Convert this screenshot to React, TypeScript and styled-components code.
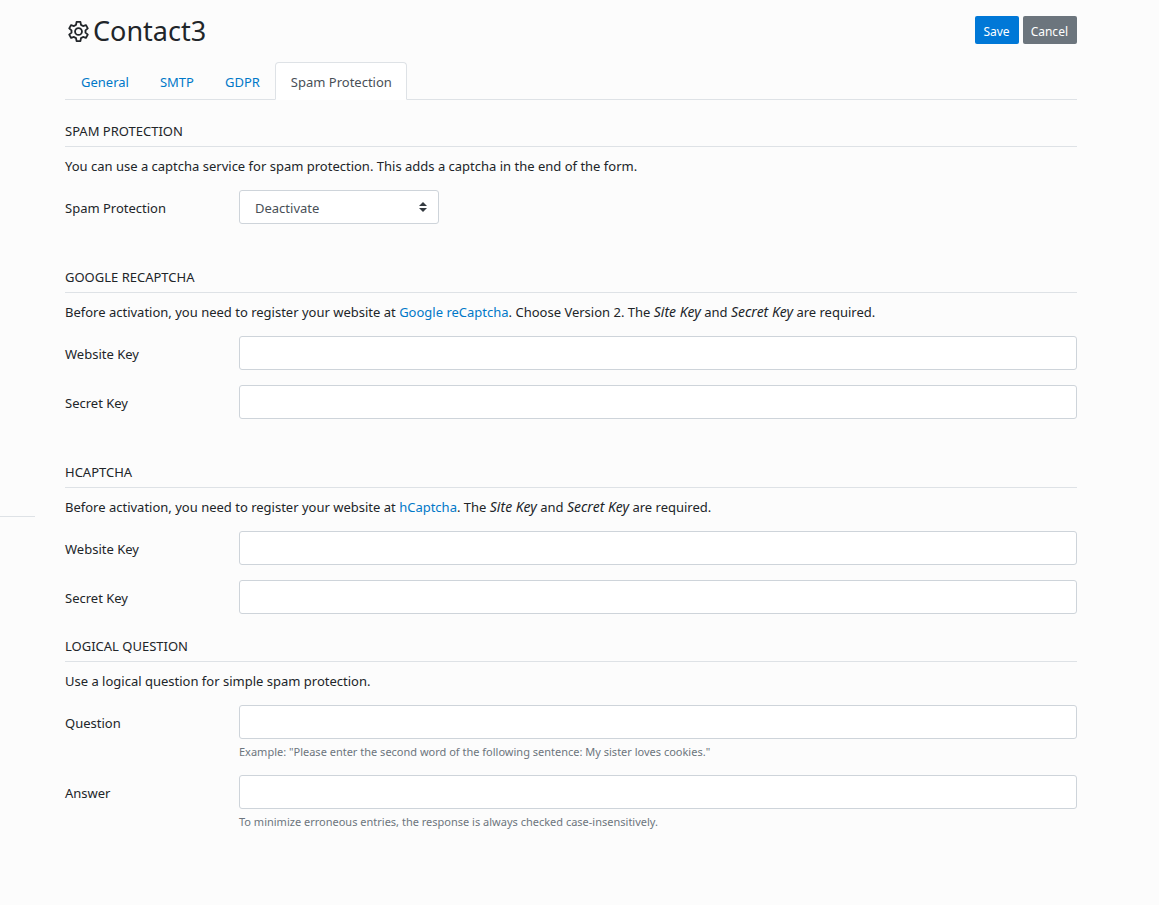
import React from 'react';
import styled, { createGlobalStyle } from 'styled-components';

const GlobalStyle = createGlobalStyle`
  *, *::before, *::after { box-sizing: border-box; }
  body {
    margin: 0;
    background: #fcfcfc;
    color: #212529;
    font-family: "Noto Sans", "Open Sans", sans-serif;
    font-size: 13px;
    line-height: 21px;
  }
  a { color: #0078c8; text-decoration: none; }
  a:hover { text-decoration: underline; }
`;

const Page = styled.div`
  display: flex;
  min-height: 100vh;
`;

const Sidebar = styled.aside`
  flex: 0 0 35px;
  padding-top: 516px;
`;

const Divider = styled.hr`
  margin: 0;
  border: 0;
  border-top: 1px solid #dee2e6;
`;

const Main = styled.main`
  flex: 1;
  min-width: 0;
  padding: 0 82px 48px 30px;
`;

const Header = styled.header`
  display: flex;
  justify-content: space-between;
  align-items: flex-start;
  height: 62px;
  padding-top: 16px;
`;

const Title = styled.h1`
  display: flex;
  align-items: center;
  gap: 3px;
  margin: 0;
  padding-left: 2px;
  font-size: 27px;
  line-height: 30px;
  font-weight: 400;
`;

const Actions = styled.div`
  display: flex;
  gap: 4px;
`;

const Button = styled.button<{ $tone: string }>`
  height: 28px;
  padding: 2px 9px 0 8px;
  border: 0;
  border-radius: 2px;
  background: ${(p) => p.$tone};
  color: #fff;
  font: inherit;
  font-size: 12px;
  cursor: pointer;
`;

const Tabs = styled.nav`
  display: flex;
  border-bottom: 1px solid #dee2e6;
`;

const Tab = styled.a<{ $active?: boolean }>`
  height: 38px;
  margin-bottom: -1px;
  padding: 9px 14px 0 15px;
  border: 1px solid ${(p) => (p.$active ? '#dee2e6' : 'transparent')};
  border-bottom-color: ${(p) => (p.$active ? '#fff' : 'transparent')};
  border-radius: 4px 4px 0 0;
  background: ${(p) => (p.$active ? '#fff' : 'transparent')};
  ${(p) => p.$active && 'color: #495057;'}
`;

const Section = styled.section<{ $gap: number }>`
  padding-top: ${(p) => p.$gap}px;
`;

const Heading = styled.h2`
  margin: 0 0 9px;
  padding-bottom: 5px;
  border-bottom: 1px solid #dee2e6;
  font-size: 13px;
  line-height: 20px;
  font-weight: 400;
  text-transform: uppercase;
`;

const Intro = styled.p`
  margin: 0 0 13px;

  em {
    font-size: 14px;
    line-height: 20px;
  }
`;

const Row = styled.div`
  display: grid;
  grid-template-columns: 174px minmax(0, 1fr);
  margin-bottom: 15px;
`;

const Label = styled.label`
  padding-top: 8px;
`;

const Input = styled.input`
  display: block;
  width: 100%;
  height: 34px;
  padding: 6px 15px;
  border: 1px solid #ced4da;
  border-radius: 3px;
  background: #fff;
  color: #495057;
  font: inherit;
`;

const SelectBox = styled.div`
  position: relative;
  width: 200px;
`;

const Select = styled.select`
  display: block;
  width: 100%;
  height: 34px;
  padding: 2px 28px 0 15px;
  border: 1px solid #ced4da;
  border-radius: 3px;
  background: #fff;
  color: #495057;
  font: inherit;
  appearance: none;
`;

const Arrows = styled.svg`
  position: absolute;
  top: 12px;
  right: 12px;
  pointer-events: none;
`;

const Hint = styled.small`
  display: block;
  margin-top: 4px;
  color: #6c757d;
  font-size: 11px;
  line-height: 17px;
`;

const GearIcon = () => (
  <svg width="23" height="23" viewBox="0 0 24 24" fill="none" stroke="currentColor" strokeWidth="1.9" strokeLinejoin="round" aria-hidden="true">
    <path d="M10 2h4l.6 3.1 2.1 1.2 3-1 2 3.4-2.4 2.1v2.4l2.4 2.1-2 3.4-3-1-2.1 1.2L14 22h-4l-.6-3.1-2.1-1.2-3 1-2-3.4 2.4-2.1v-2.4L2.300 8.700l2-3.400 3 1 2.100-1.200z" />
    <circle cx="12" cy="12" r="3.600" />
  </svg>
);

type FieldProps = { id: string; label: string; hint?: string };

const Field = ({ id, label, hint }: FieldProps) => (
  <Row>
    <Label htmlFor={id}>{label}</Label>
    <div>
      <Input id={id} type="text" />
      {hint && <Hint>{hint}</Hint>}
    </div>
  </Row>
);

export default function App() {
  return (
    <>
      <GlobalStyle />
      <Page>
        <Sidebar>
          <Divider />
        </Sidebar>
        <Main>
          <Header>
            <Title>
              <GearIcon />
              Contact3
            </Title>
            <Actions>
              <Button type="button" $tone="#0078d7">Save</Button>
              <Button type="button" $tone="#6c757d">Cancel</Button>
            </Actions>
          </Header>
          <Tabs>
            <Tab href="#general">General</Tab>
            <Tab href="#smtp">SMTP</Tab>
            <Tab href="#gdpr">GDPR</Tab>
            <Tab href="#spam" $active>Spam Protection</Tab>
          </Tabs>

          <Section $gap={21}>
            <Heading>Spam Protection</Heading>
            <Intro>You can use a captcha service for spam protection. This adds a captcha in the end of the form.</Intro>
            <Row>
              <Label htmlFor="protection">Spam Protection</Label>
              <SelectBox>
                <Select id="protection" defaultValue="off">
                  <option value="off">Deactivate</option>
                  <option value="google">Google reCaptcha</option>
                  <option value="hcaptcha">hCaptcha</option>
                  <option value="question">Logical Question</option>
                </Select>
                <Arrows width="8" height="10" viewBox="0 0 8 10" fill="#343a40" aria-hidden="true">
                  <path d="M4 0l4 4H0zM0 6h8l-4 4z" />
                </Arrows>
              </SelectBox>
            </Row>
          </Section>

          <Section $gap={28}>
            <Heading>Google reCaptcha</Heading>
            <Intro>
              Before activation, you need to register your website at <a href="#recaptcha">Google reCaptcha</a>. Choose
              Version 2. The <em>Site Key</em> and <em>Secret Key</em> are required.
            </Intro>
            <Field id="google-site" label="Website Key" />
            <Field id="google-secret" label="Secret Key" />
          </Section>

          <Section $gap={28}>
            <Heading>hCaptcha</Heading>
            <Intro>
              Before activation, you need to register your website at <a href="#hcaptcha">hCaptcha</a>. The{' '}
              <em>Site Key</em> and <em>Secret Key</em> are required.
            </Intro>
            <Field id="hcaptcha-site" label="Website Key" />
            <Field id="hcaptcha-secret" label="Secret Key" />
          </Section>

          <Section $gap={7}>
            <Heading>Logical Question</Heading>
            <Intro>Use a logical question for simple spam protection.</Intro>
            <Field
              id="question"
              label="Question"
              hint={'Example: "Please enter the second word of the following sentence: My sister loves cookies."'}
            />
            <Field
              id="answer"
              label="Answer"
              hint="To minimize erroneous entries, the response is always checked case-insensitively."
            />
          </Section>
        </Main>
      </Page>
    </>
  );
}
